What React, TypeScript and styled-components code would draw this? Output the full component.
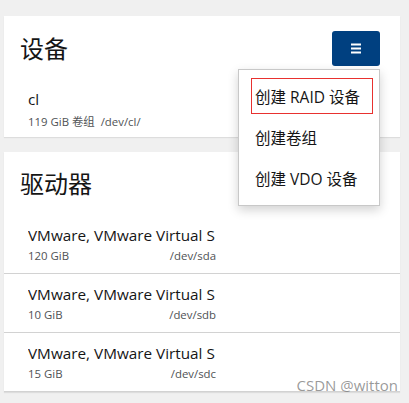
import React from "react";
import styled, { createGlobalStyle } from "styled-components";

const Global = createGlobalStyle`
  html, body { margin: 0; padding: 0; }
  body {
    background: #f0f0f0;
    font-family: "Open Sans", "Noto Sans CJK SC", sans-serif;
    color: #151515;
    width: 409px;
    height: 403px;
    overflow: hidden;
  }
`;

const Page = styled.div`
  display: flex;
  flex-direction: column;
  gap: 15px;
  padding: 16px 9px 0 4px;
  position: relative;
  height: 403px;
  box-sizing: border-box;
`;

const Card = styled.section`
  background: #fff;
  position: relative;
  box-shadow: 0 1px 1px rgba(0, 0, 0, 0.08);
`;

const Header = styled.div<{ $pt: number; $h: number }>`
  display: flex;
  align-items: center;
  justify-content: space-between;
  padding: ${(p) => p.$pt}px 20px 0 16px;
  height: ${(p) => p.$h}px;
  box-sizing: border-box;
`;

const Title = styled.h2`
  margin: 0;
  font-size: 24px;
  font-weight: 400;
  line-height: 1;
`;

const MenuButton = styled.button`
  width: 48px;
  height: 35px;
  border: none;
  border-radius: 3px;
  background: #004080;
  display: flex;
  align-items: center;
  justify-content: center;
  padding: 0;
`;

const Dropdown = styled.ul`
  position: absolute;
  top: 53px;
  right: 20px;
  width: 142px;
  height: 137px;
  box-sizing: border-box;
  margin: 0;
  padding: 9px 0 0;
  list-style: none;
  background: #fff;
  border: 1px solid #c8c8c8;
  box-shadow: 0 4px 10px rgba(0, 0, 0, 0.18);
  z-index: 2;
`;

const DropItem = styled.li<{ $focus?: boolean }>`
  display: flex;
  align-items: center;
  height: 34px;
  margin: 0 7px 7px 13px;
  padding-left: 3px;
  font-size: 15.5px;
  color: #151515;
  white-space: nowrap;
  outline: ${(p) => (p.$focus ? "1px solid #e8312f" : "none")};
`;

const Body = styled.div`
  padding: 11px 0 0 24px;
  height: 66px;
  box-sizing: border-box;
  display: flex;
  flex-direction: column;
  justify-content: center;
  gap: 7px;
`;

const ItemName = styled.div`
  font-size: 15.3px;
  line-height: 18px;
  color: #151515;
  white-space: nowrap;
`;

const Meta = styled.div`
  font-size: 11.4px;
  line-height: 14px;
  color: #4f5255;
  white-space: nowrap;
`;

const Row = styled.div`
  height: 59px;
  border-bottom: 1px solid #d2d2d2;
  box-sizing: border-box;
  padding: 11px 0 0 24px;
`;

const RowContent = styled.div`
  width: 188px;
  display: flex;
  flex-direction: column;
  gap: 5px;
  overflow: hidden;
`;

const MetaLine = styled.div`
  display: flex;
  justify-content: space-between;
  font-size: 11.4px;
  line-height: 14px;
  color: #4f5255;
`;

const Watermark = styled.div`
  position: absolute;
  right: 11px;
  bottom: 8px;
  font-size: 15px;
  color: rgba(120, 120, 120, 0.75);
  font-family: "Open Sans", sans-serif;
  z-index: 3;
`;

const Hamburger = () => (
  <svg width="10" height="11" viewBox="0 0 10 11">
    <rect x="0" y="0.5" width="10" height="2" fill="#fff" />
    <rect x="0" y="4.5" width="10" height="2" fill="#fff" />
    <rect x="0" y="8.5" width="10" height="2" fill="#fff" />
  </svg>
);

const drives = [
  { size: "120 GiB", dev: "/dev/sda" },
  { size: "10 GiB", dev: "/dev/sdb" },
  { size: "15 GiB", dev: "/dev/sdc" },
];

export default function App() {
  return (
    <>
      <Global />
      <Page>
        <Card>
          <Header $pt={10} $h={55}>
            <Title>设备</Title>
            <MenuButton aria-label="menu">
              <Hamburger />
            </MenuButton>
          </Header>
          <Body>
            <ItemName>cl</ItemName>
            <Meta>119 GiB 卷组&nbsp;&nbsp;/dev/cl/</Meta>
          </Body>
          <Dropdown>
            <DropItem $focus>创建 RAID 设备</DropItem>
            <DropItem>创建卷组</DropItem>
            <DropItem>创建 VDO 设备</DropItem>
          </Dropdown>
        </Card>
        <Card>
          <Header $pt={0} $h={63}>
            <Title>驱动器</Title>
          </Header>
          {drives.map((d) => (
            <Row key={d.dev}>
              <RowContent>
                <ItemName>VMware, VMware Virtual S</ItemName>
                <MetaLine>
                  <span>{d.size}</span>
                  <span>{d.dev}</span>
                </MetaLine>
              </RowContent>
            </Row>
          ))}
        </Card>
        <Watermark>CSDN @witton</Watermark>
      </Page>
    </>
  );
}
